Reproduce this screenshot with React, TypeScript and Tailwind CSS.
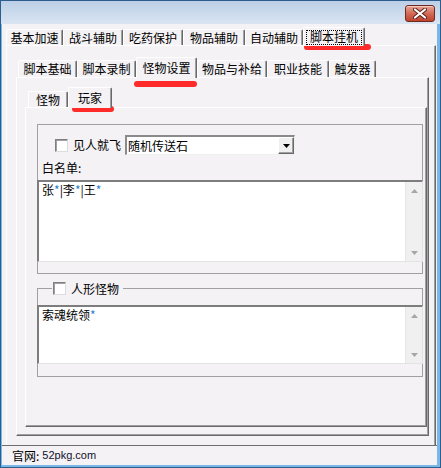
import type { ReactNode } from "react";
import clsx from "clsx";

const body = "bg-[#f4f2f5]";

type TabDef = { label: string; w: string; active?: boolean };

const outerTabs: TabDef[] = [
  { label: "基本加速", w: "w-[57px]" },
  { label: "战斗辅助", w: "w-[60px]" },
  { label: "吃药保护", w: "w-[60px]" },
  { label: "物品辅助", w: "w-[62px]" },
  { label: "自动辅助", w: "w-[58px]" },
  { label: "脚本挂机", w: "w-[62px]", active: true },
];

const innerTabs: TabDef[] = [
  { label: "脚本基础", w: "w-[59px]" },
  { label: "脚本录制", w: "w-[59px]" },
  { label: "怪物设置", w: "w-[61px]", active: true },
  { label: "物品与补给", w: "w-[70px]" },
  { label: "职业技能", w: "w-[62px]" },
  { label: "触发器", w: "w-[47px]" },
];

const subTabs: TabDef[] = [
  { label: "怪物", w: "w-[40px]" },
  { label: "玩家", w: "w-[44px]", active: true },
];

function Tab({
  tab,
  idleH,
  activeH,
  focus,
}: {
  tab: TabDef;
  idleH: string;
  activeH: string;
  focus?: boolean;
}) {
  return (
    <div
      className={clsx(
        "flex shrink-0 items-center justify-center rounded-t-[2px] border-l border-r border-t border-white border-r-[#696969] text-[12px] leading-none text-black shadow-[inset_-1px_0_0_#a0a0a0]",
        tab.w,
        tab.active ? `relative z-10 -mb-px ${body} ${activeH}` : idleH
      )}
    >
      {focus && tab.active ? (
        <span className="flex h-[15px] w-[56px] items-center justify-center border border-dotted border-black">
          {tab.label}
        </span>
      ) : (
        tab.label
      )}
    </div>
  );
}

function Arrow({ up, color }: { up?: boolean; color: string }) {
  return (
    <svg width="7" height="4" viewBox="0 0 7 4">
      <path d={up ? "M3.5 0 L7 4 L0 4 Z" : "M0 0 L7 0 L3.5 4 Z"} fill={color} />
    </svg>
  );
}

function ListBox({ h, children }: { h: string; children: ReactNode }) {
  return (
    <div
      className={clsx(
        "-mx-px flex border-b border-l-2 border-r border-t-2 border-b-[#e3e3e3] border-l-[#7d7d7d] border-r-[#e3e3e3] border-t-[#7d7d7d] bg-white",
        h
      )}
    >
      <div className="flex-1 pl-[3px] pt-[1px] text-[12px] leading-[14px] text-black">
        {children}
      </div>
      <div className="flex w-[17px] flex-col justify-between border-l border-[#e6e6e6] bg-[#f0f0f0]">
        <div className="flex h-[17px] items-center justify-center">
          <Arrow up color="#a6a6a6" />
        </div>
        <div className="flex h-[17px] items-center justify-center">
          <Arrow color="#a6a6a6" />
        </div>
      </div>
    </div>
  );
}

function CheckBox() {
  return (
    <div className="h-[13px] w-[13px] shrink-0 border border-b-[#dcdcdc] border-l-[#808080] border-r-[#dcdcdc] border-t-[#808080] bg-white shadow-[inset_1px_1px_0_#a0a0a0]" />
  );
}

const Star = () => <span className="text-[#2f7fd0]">*</span>;

export default function App() {
  return (
    <div className="relative h-[468px] w-[441px] overflow-hidden border border-[#2d5d8c] bg-[#78b8e8] font-['Noto_Sans_CJK_SC','Noto_Sans',sans-serif]">
      {/* title bar */}
      <div className="flex h-[23px] justify-end bg-gradient-to-b from-[#bccfe7] to-[#dae5f2] pr-[5px] pt-[4px]">
        <div className="flex h-[17px] w-[30px] items-center justify-center rounded-[3px] border border-[#6e2a1f] bg-gradient-to-b from-[#e9a496] via-[#d26a57] to-[#c0412c] shadow-[inset_0_1px_0_#f6c9bf]">
          <svg width="14" height="11" viewBox="0 0 14 11">
            <path d="M2 1.5 L12 9.5 M12 1.5 L2 9.5" stroke="#5a2016" strokeWidth="4" strokeLinecap="round" />
            <path d="M2 1.5 L12 9.5 M12 1.5 L2 9.5" stroke="#ffffff" strokeWidth="2.2" strokeLinecap="round" />
          </svg>
        </div>
      </div>

      {/* client area */}
      <div className={clsx("mb-[2px] ml-px mr-[3px] flex h-[441px] flex-col", body)}>
        <div className="ml-[4px] mt-[3px] flex h-[18px] items-end">
          {outerTabs.map((t) => (
            <Tab key={t.label} tab={t} idleH="h-[16px]" activeH="h-[19px]" focus />
          ))}
        </div>

        <div className="ml-[4px] h-[400px] w-[430px] border-l border-r border-t border-white border-r-[#696969] shadow-[inset_-1px_0_0_#a0a0a0]">
          <div className="ml-[11px] mt-[11px] flex h-[20px] items-end">
            {innerTabs.map((t) => (
              <Tab key={t.label} tab={t} idleH="h-[17px]" activeH="h-[21px]" />
            ))}
          </div>

          <div className="ml-[9px] h-[359px] w-[413px] border border-white border-b-[#696969] border-r-[#696969] shadow-[inset_-1px_-1px_0_#a0a0a0]">
            <div className="ml-[11px] mt-[9px] flex h-[20px] items-end">
              {subTabs.map((t) => (
                <Tab key={t.label} tab={t} idleH="h-[16px]" activeH="h-[21px]" />
              ))}
            </div>

            <div className="ml-[8px] h-[320px] w-[402px] border border-white border-b-[#696969] border-r-[#696969] shadow-[inset_-1px_-1px_0_#a0a0a0]">
              {/* group 1 */}
              <div className="ml-[11px] mt-[16px] flex h-[150px] w-[386px] flex-col border border-[#a0a0a0]">
                <div className="mt-[10px] flex h-[20px] items-center text-[12px] leading-none text-black">
                  <div className="ml-[17px]">
                    <CheckBox />
                  </div>
                  <span className="ml-[5px] w-[48px]">见人就飞</span>
                  <div className="ml-[4px] flex h-[20px] w-[170px] items-center border-b border-l-2 border-r border-t-2 border-b-[#f0f0f0] border-l-[#8a8a8a] border-r-[#f0f0f0] border-t-[#8a8a8a] bg-white">
                    <span className="flex-1 pl-[1px]">随机传送石</span>
                    <div className="flex h-[17px] w-[16px] items-center justify-center border border-b-[#696969] border-l-white border-r-[#696969] border-t-white bg-[#f0f0f0] shadow-[inset_-1px_-1px_0_#a0a0a0]">
                      <Arrow color="#000000" />
                    </div>
                  </div>
                </div>
                <div className="flex h-[25px] items-center pl-[4px] text-[12px] leading-none text-black">
                  白名单:
                </div>
                <ListBox h="h-[82px]">
                  张<Star />|李<Star />|王<Star />
                </ListBox>
              </div>

              {/* group 2 */}
              <div className="relative ml-[11px] mt-[14px] flex h-[89px] w-[386px] flex-col border border-[#a0a0a0]">
                <div className={clsx("absolute -top-[7px] left-[14px] flex h-[13px] items-center pr-[4px] text-[12px] leading-none text-black", body)}>
                  <div className="ml-px">
                    <CheckBox />
                  </div>
                  <span className="ml-[5px]">人形怪物</span>
                </div>
                <div className="h-[16px]" />
                <ListBox h="h-[59px]">
                  索魂统领<Star />
                </ListBox>
              </div>
            </div>
          </div>
        </div>

        <div className="flex h-[20px] items-center border-t border-[#6d6d6d] pl-[10px] text-[12px] leading-none text-black">
          <span>官网:</span>
          <span className="ml-[3px] font-['Liberation_Sans',sans-serif] text-[11px] text-[#10102a]">52pkg.com</span>
        </div>
      </div>

      {/* red marker strokes */}
      <span className="absolute left-[303px] top-[43px] h-[6px] w-[67px] rounded-full bg-[#ff2b2b]" />
      <span className="absolute left-[133px] top-[80px] h-[6px] w-[63px] rounded-full bg-[#ff2b2b]" />
      <span className="absolute left-[71px] top-[105px] h-[6px] w-[42px] rounded-full bg-[#ff2b2b]" />
    </div>
  );
}
